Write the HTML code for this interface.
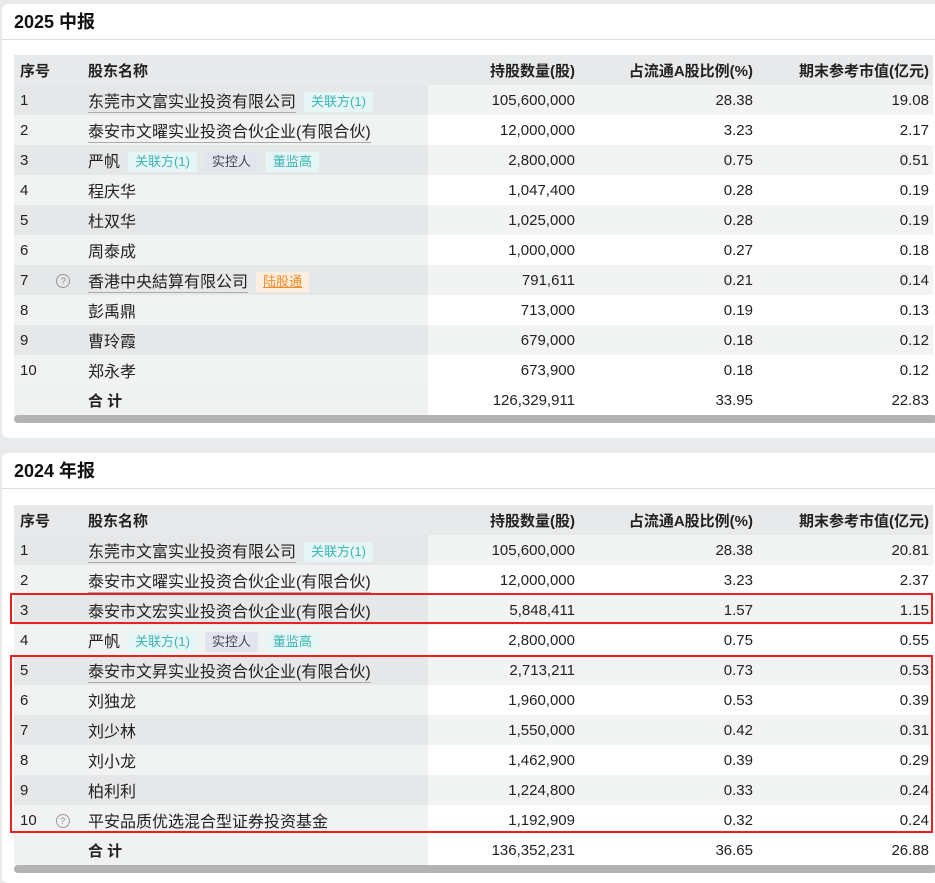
<!DOCTYPE html>
<html><head><meta charset="utf-8"><style>
*{margin:0;padding:0;box-sizing:border-box}
body{width:935px;height:868px;overflow:hidden;background:#e9eaeb;font-family:"Liberation Sans","Noto Sans CJK SC",sans-serif;color:#222;position:relative}
.card{position:absolute;left:2px;width:940px;background:#fff;border-radius:6px}
.title{height:36px;line-height:36px;padding-left:12px;font-size:18px;font-weight:bold;border-bottom:1.5px solid #ddd;color:#111}
table{position:absolute;left:12px;border-collapse:collapse;font-size:15px;width:919px;table-layout:fixed}
td,th{height:30px;padding:0;white-space:nowrap;overflow:visible}
th{font-weight:bold;background:#e8e9ea;text-align:right;padding-right:4px;color:#222;font-size:15px}
th.l{text-align:left;padding-left:6px}
td.s{padding-left:6px}
td.n{padding-left:6px;font-size:16px}
td.r{text-align:right;padding-right:4px}
tr:nth-child(odd) td.s,tr:nth-child(odd) td.n{background:#f1f2f2}
tr:nth-child(even) td.s,tr:nth-child(even) td.n{background:#e6e7e8}
tr:nth-child(even) td.r{background:#f2f3f3}
tr.tot td.s,tr.tot td.n{background:#f0f1f1}
tr.tot td.r{background:#fff}
.u{border-bottom:1px solid #aaa;padding-bottom:1px}
.tag{display:inline-block;font-size:13px;padding:0 7px;height:20px;line-height:20px;margin-left:8px;border-radius:2px;vertical-align:middle}
.g{background:#e6f5f5;color:#3cb6b6}
.p{background:#e3e5ee;color:#445}
.o{background:#fdeedd;color:#f08a2a;text-decoration:underline}
.q{display:inline-block;width:14px;height:14px;border:1px solid #999;border-radius:50%;font-size:9px;line-height:12px;text-align:center;color:#888;margin-left:28px;vertical-align:middle}
.bar{position:absolute;left:12px;width:923px;height:8px;background:#b3b3b3;border-radius:4px}
.red{position:absolute;border:2px solid #e8231f}
</style></head><body>
<div class="card" style="top:4px;height:434px">
<div class="title">2025 中报</div>
<table style="top:51px">
<colgroup><col style="width:68px"><col style="width:346px"><col style="width:151px"><col style="width:178px"><col style="width:176px"></colgroup>
<tr><th class="l">序号</th><th class="l">股东名称</th><th>持股数量(股)</th><th>占流通A股比例(%)</th><th>期末参考市值(亿元)</th></tr>
<tr><td class="s">1</td><td class="n"><span class="u">东莞市文富实业投资有限公司</span><span class="tag g">关联方(1)</span></td><td class="r">105,600,000</td><td class="r">28.38</td><td class="r">19.08</td></tr>
<tr><td class="s">2</td><td class="n"><span class="u">泰安市文曜实业投资合伙企业(有限合伙)</span></td><td class="r">12,000,000</td><td class="r">3.23</td><td class="r">2.17</td></tr>
<tr><td class="s">3</td><td class="n">严帆<span class="tag g">关联方(1)</span><span class="tag p">实控人</span><span class="tag g">董监高</span></td><td class="r">2,800,000</td><td class="r">0.75</td><td class="r">0.51</td></tr>
<tr><td class="s">4</td><td class="n">程庆华</td><td class="r">1,047,400</td><td class="r">0.28</td><td class="r">0.19</td></tr>
<tr><td class="s">5</td><td class="n">杜双华</td><td class="r">1,025,000</td><td class="r">0.28</td><td class="r">0.19</td></tr>
<tr><td class="s">6</td><td class="n">周泰成</td><td class="r">1,000,000</td><td class="r">0.27</td><td class="r">0.18</td></tr>
<tr><td class="s">7<span class="q">?</span></td><td class="n"><span class="u">香港中央結算有限公司</span><span class="tag o">陆股通</span></td><td class="r">791,611</td><td class="r">0.21</td><td class="r">0.14</td></tr>
<tr><td class="s">8</td><td class="n">彭禹鼎</td><td class="r">713,000</td><td class="r">0.19</td><td class="r">0.13</td></tr>
<tr><td class="s">9</td><td class="n">曹玲霞</td><td class="r">679,000</td><td class="r">0.18</td><td class="r">0.12</td></tr>
<tr><td class="s">10</td><td class="n">郑永孝</td><td class="r">673,900</td><td class="r">0.18</td><td class="r">0.12</td></tr>
<tr class="tot"><td class="s"></td><td class="n" style="font-size:15px"><b>合 计</b></td><td class="r">126,329,911</td><td class="r">33.95</td><td class="r">22.83</td></tr>
</table>
<div class="bar" style="top:411px"></div>
</div>
<div class="card" style="top:453px;height:430px">
<div class="title">2024 年报</div>
<table style="top:52px">
<colgroup><col style="width:68px"><col style="width:346px"><col style="width:151px"><col style="width:178px"><col style="width:176px"></colgroup>
<tr><th class="l">序号</th><th class="l">股东名称</th><th>持股数量(股)</th><th>占流通A股比例(%)</th><th>期末参考市值(亿元)</th></tr>
<tr><td class="s">1</td><td class="n"><span class="u">东莞市文富实业投资有限公司</span><span class="tag g">关联方(1)</span></td><td class="r">105,600,000</td><td class="r">28.38</td><td class="r">20.81</td></tr>
<tr><td class="s">2</td><td class="n"><span class="u">泰安市文曜实业投资合伙企业(有限合伙)</span></td><td class="r">12,000,000</td><td class="r">3.23</td><td class="r">2.37</td></tr>
<tr><td class="s">3</td><td class="n"><span class="u">泰安市文宏实业投资合伙企业(有限合伙)</span></td><td class="r">5,848,411</td><td class="r">1.57</td><td class="r">1.15</td></tr>
<tr><td class="s">4</td><td class="n">严帆<span class="tag g">关联方(1)</span><span class="tag p">实控人</span><span class="tag g">董监高</span></td><td class="r">2,800,000</td><td class="r">0.75</td><td class="r">0.55</td></tr>
<tr><td class="s">5</td><td class="n"><span class="u">泰安市文昇实业投资合伙企业(有限合伙)</span></td><td class="r">2,713,211</td><td class="r">0.73</td><td class="r">0.53</td></tr>
<tr><td class="s">6</td><td class="n">刘独龙</td><td class="r">1,960,000</td><td class="r">0.53</td><td class="r">0.39</td></tr>
<tr><td class="s">7</td><td class="n">刘少林</td><td class="r">1,550,000</td><td class="r">0.42</td><td class="r">0.31</td></tr>
<tr><td class="s">8</td><td class="n">刘小龙</td><td class="r">1,462,900</td><td class="r">0.39</td><td class="r">0.29</td></tr>
<tr><td class="s">9</td><td class="n">柏利利</td><td class="r">1,224,800</td><td class="r">0.33</td><td class="r">0.24</td></tr>
<tr><td class="s">10<span class="q" style="margin-left:19px">?</span></td><td class="n"><span class="u">平安品质优选混合型证券投资基金</span></td><td class="r">1,192,909</td><td class="r">0.32</td><td class="r">0.24</td></tr>
<tr class="tot"><td class="s"></td><td class="n" style="font-size:15px"><b>合 计</b></td><td class="r">136,352,231</td><td class="r">36.65</td><td class="r">26.88</td></tr>
</table>
<div class="bar" style="top:412px"></div>
</div>
<div class="red" style="left:10px;top:593px;width:923px;height:31px"></div>
<div class="red" style="left:10px;top:655px;width:923px;height:178px"></div>
</body></html>
